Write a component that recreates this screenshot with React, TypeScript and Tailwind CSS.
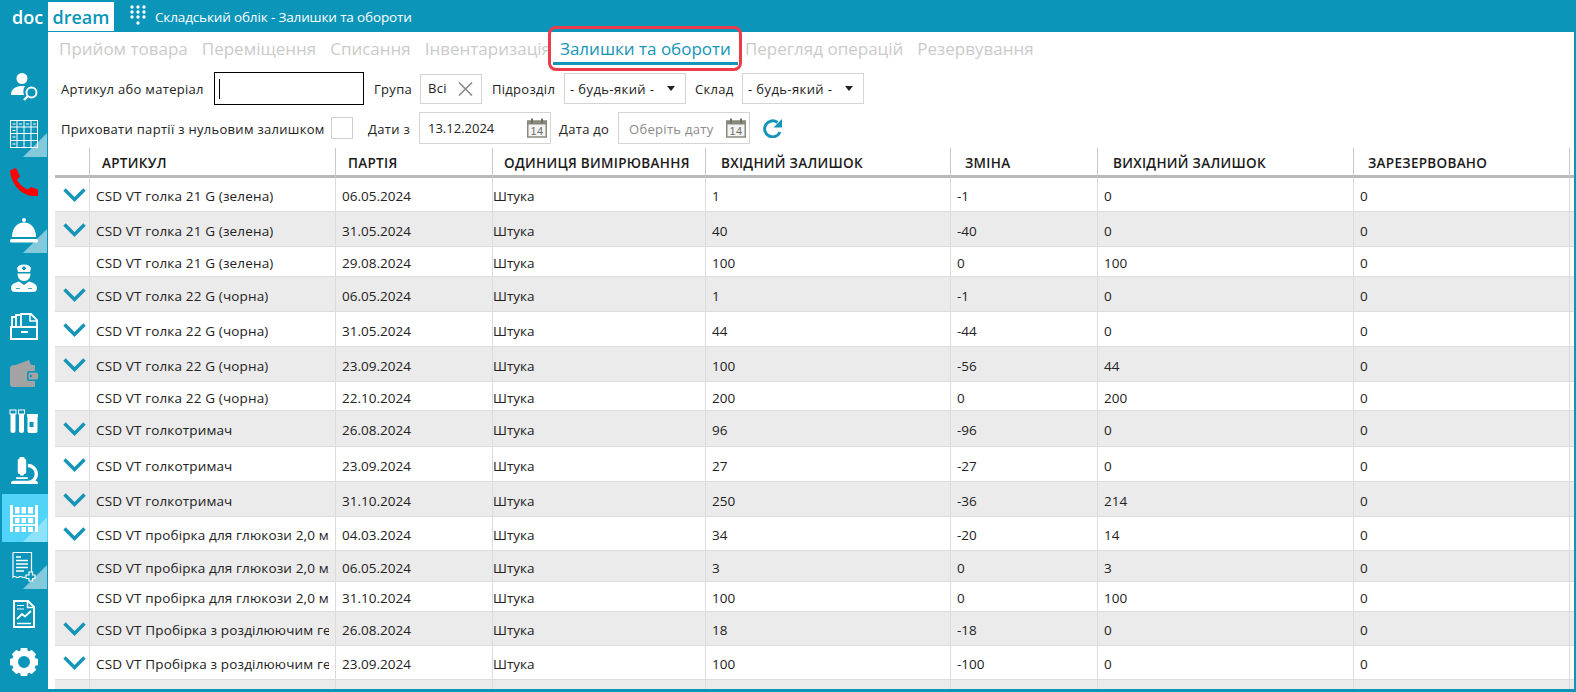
import { FaMicroscope } from "react-icons/fa"
import type { ReactNode } from "react"

const grid = "grid grid-cols-[34px_246px_157px_213px_245px_147px_256px_217px]"
const cell = "border-l border-[#dcdcdc] pl-[6px] pt-[4px] flex items-center"

const rows = [
  { h: "h-[34px]", chev: true, a: "CSD VT голка 21 G (зелена)", d: "06.05.2024", i: "1", c: "-1", o: "0" },
  { h: "h-[35px]", chev: true, a: "CSD VT голка 21 G (зелена)", d: "31.05.2024", i: "40", c: "-40", o: "0" },
  { h: "h-[30px]", chev: false, a: "CSD VT голка 21 G (зелена)", d: "29.08.2024", i: "100", c: "0", o: "100" },
  { h: "h-[35px]", chev: true, a: "CSD VT голка 22 G (чорна)", d: "06.05.2024", i: "1", c: "-1", o: "0" },
  { h: "h-[35px]", chev: true, a: "CSD VT голка 22 G (чорна)", d: "31.05.2024", i: "44", c: "-44", o: "0" },
  { h: "h-[35px]", chev: true, a: "CSD VT голка 22 G (чорна)", d: "23.09.2024", i: "100", c: "-56", o: "44" },
  { h: "h-[29px]", chev: false, a: "CSD VT голка 22 G (чорна)", d: "22.10.2024", i: "200", c: "0", o: "200" },
  { h: "h-[36px]", chev: true, a: "CSD VT голкотримач", d: "26.08.2024", i: "96", c: "-96", o: "0" },
  { h: "h-[35px]", chev: true, a: "CSD VT голкотримач", d: "23.09.2024", i: "27", c: "-27", o: "0" },
  { h: "h-[35px]", chev: true, a: "CSD VT голкотримач", d: "31.10.2024", i: "250", c: "-36", o: "214" },
  { h: "h-[34px]", chev: true, a: "CSD VT пробірка для глюкози 2,0 мл", d: "04.03.2024", i: "34", c: "-20", o: "14" },
  { h: "h-[31px]", chev: false, a: "CSD VT пробірка для глюкози 2,0 мл", d: "06.05.2024", i: "3", c: "0", o: "3" },
  { h: "h-[30px]", chev: false, a: "CSD VT пробірка для глюкози 2,0 мл", d: "31.10.2024", i: "100", c: "0", o: "100" },
  { h: "h-[34px]", chev: true, a: "CSD VT Пробірка з розділюючим гелем", d: "26.08.2024", i: "18", c: "-18", o: "0" },
  { h: "h-[34px]", chev: true, a: "CSD VT Пробірка з розділюючим гелем", d: "23.09.2024", i: "100", c: "-100", o: "0" },
  { h: "h-[34px]", chev: false, a: "", d: "", i: "", c: "", o: "" },
]

const heads = [
  { t: "АРТИКУЛ", cls: "border-l border-[#c8c8c8] pl-[12px]" },
  { t: "ПАРТІЯ", cls: "border-l border-[#c8c8c8] pl-[12px]" },
  { t: "ОДИНИЦЯ ВИМІРЮВАННЯ", cls: "border-l border-[#c8c8c8] pl-[11px]" },
  { t: "ВХІДНИЙ ЗАЛИШОК", cls: "border-l border-[#c8c8c8] pl-[15px]" },
  { t: "ЗМІНА", cls: "border-l border-[#c8c8c8] pl-[14px]" },
  { t: "ВИХІДНИЙ ЗАЛИШОК", cls: "border-l border-[#c8c8c8] pl-[15px]" },
  { t: "ЗАРЕЗЕРВОВАНО", cls: "border-l border-r border-[#c8c8c8] pl-[14px]" },
]

const teeth = [0, 45, 90, 135, 180, 225, 270, 315]

function Corner() {
  return <polygon points="23,47 47,47 47,23" fill="#fff" opacity="0.5" />
}

function Item({ children, active }: { children: ReactNode; active?: boolean }) {
  return (
    <div className={active ? "h-[48px] w-[46px] ml-[2px] bg-[#52d3f8] flex items-center justify-center" : "h-[48px] w-[48px] flex items-center justify-center"}>
      {children}
    </div>
  )
}

function Icon({ children, shift }: { children: ReactNode; shift?: boolean }) {
  return (
    <svg width="48" height="48" viewBox="0 0 48 48" className={shift ? "shrink-0 -ml-[2px]" : "shrink-0"}>
      {children}
    </svg>
  )
}

function Calendar() {
  return (
    <svg width="20" height="20" viewBox="0 0 20 20" className="shrink-0">
      <rect x="0.75" y="3" width="18.5" height="16" fill="#f4f4f4" stroke="#8a8a7c" strokeWidth="1.5" />
      <rect x="0.75" y="3" width="18.5" height="3.5" fill="#8a8a7c" />
      <rect x="4" y="0.5" width="2" height="5" fill="#6f6f63" />
      <rect x="14" y="0.5" width="2" height="5" fill="#6f6f63" />
      <text x="10" y="17" textAnchor="middle" fontSize="11" fontFamily="Liberation Sans, sans-serif" fill="#6f6f63">14</text>
    </svg>
  )
}

function Select() {
  return (
    <div className="w-[122px] h-[31px] border border-[#d4d4d4] flex items-center justify-between pl-[5px] pr-[10px] text-[13px] tracking-[0.4px] text-[#222]">
      <span className="pt-[2px]">- будь-який -</span>
      <span className="w-0 h-0 border-l-[4.5px] border-r-[4.5px] border-t-[5px] border-l-transparent border-r-transparent border-t-[#222]" />
    </div>
  )
}

function Sidebar() {
  return (
    <aside className="w-[48px] shrink-0 pt-[30px]">
      <Item>
        <Icon>
          <circle cx="22" cy="16.5" r="5.5" fill="#fff" />
          <path d="M11 33 C11 27 15 25 20 24 L25 24 C23 27 23 30 24 33 Z" fill="#fff" />
          <circle cx="31.5" cy="30.5" r="5" fill="none" stroke="#fff" strokeWidth="2" />
          <path d="M27.5 34.5 L24 38" stroke="#fff" strokeWidth="2.4" />
        </Icon>
      </Item>
      <Item>
        <Icon>
          <rect x="10.5" y="10.5" width="27" height="27" fill="none" stroke="#fff" />
          <path d="M17 11V37 M24 11V37 M31 11V37 M11 17H37 M11 23.5H37 M11 30.5H37" stroke="#fff" strokeWidth="1" />
          <path d="M12.5 14H15.5 M19 14H22 M26 14H29 M33 14H36 M12.5 20.5H15.5 M12.5 27H15.5 M12.5 34H15.5" stroke="#fff" strokeWidth="1" />
          <Corner />
        </Icon>
      </Item>
      <Item>
        <Icon>
          <path d="M10 12.5 L16 10 L20 18.5 L17 21.5 C19 26 23.5 30 28 31.5 L31 29 L38 31.5 L38 38 L33 38 C20 37 11 25 10 12.5 Z" fill="#f00" />
        </Icon>
      </Item>
      <Item>
        <Icon>
          <circle cx="24" cy="14" r="2" fill="#fff" />
          <path d="M12 31 C12 22 17 16.5 24 16.5 C31 16.5 36 22 36 31 Z" fill="#fff" />
          <rect x="10" y="33" width="28" height="3.5" rx="1.5" fill="#fff" />
          <Corner />
        </Icon>
      </Item>
      <Item>
        <Icon>
          <path d="M17 14 C18 11.5 21 10.5 24 10.5 C27 10.5 30 11.5 31 14 L30 18 H18 Z" fill="#fff" />
          <path d="M17.5 19.5 H30.5 C30.5 24 28 27 24 27 C20 27 17.5 24 17.5 19.5 Z" fill="#fff" />
          <path d="M11 34 C11 30 15 28.5 19 27.5 L24 31 L29 27.5 C33 28.5 37 30 37 34 C37 37 35 38 33 38 H15 C13 38 11 37 11 34 Z" fill="#fff" />
          <path d="M23 12.5 H25 V13.5 H26 V15 H25 V16 H23 V15 H22 V13.5 H23 Z" fill="#0a95b9" />
          <path d="M16 34.5 H20 M28 34.5 H32" stroke="#0a95b9" strokeWidth="0.8" />
        </Icon>
      </Item>
      <Item>
        <Icon>
          <path d="M12 25 V15 H15 M16 25 V13 H20 M21 25 V12 H31 L37 18 V25" fill="none" stroke="#fff" strokeWidth="1.8" />
          <path d="M30 12.5 V19 H37" fill="none" stroke="#fff" strokeWidth="1.5" />
          <rect x="11" y="25" width="26" height="12" fill="none" stroke="#fff" strokeWidth="2" />
          <rect x="21" y="29" width="7" height="2" fill="#fff" />
        </Icon>
      </Item>
      <Item>
        <Icon>
          <path d="M13 16 L29 10 L31 15 Z" fill="#a3a3a3" />
          <path d="M10 19 C10 16.5 11.5 15 14 15 H35 V37 H13 C11 37 10 36 10 34 Z" fill="#a3a3a3" />
          <rect x="27" y="21" width="11" height="10" rx="2" fill="#0a95b9" />
          <rect x="28.5" y="22.5" width="9.5" height="7" rx="1.5" fill="#a3a3a3" />
          <circle cx="31" cy="26" r="1.2" fill="#0a95b9" />
        </Icon>
      </Item>
      <Item>
        <Icon>
          <path d="M10.5 13 H15.5 V32.5 A2.5 2.5 0 0 1 10.5 32.5 Z M19 13 H24 V32.5 A2.5 2.5 0 0 1 19 32.5 Z" fill="#fff" />
          <rect x="10" y="12" width="6" height="4" fill="#0a95b9" stroke="#fff" />
          <rect x="18.5" y="12" width="6" height="4" fill="#0a95b9" stroke="#fff" />
          <rect x="27" y="16" width="11" height="3" fill="#fff" />
          <path d="M27.5 19 H37.5 V33 C37.5 34.5 36.5 35 35.5 35 H29.5 C28.5 35 27.5 34.5 27.5 33 Z" fill="#fff" />
          <rect x="29.5" y="24" width="4" height="5" fill="#0a95b9" />
        </Icon>
      </Item>
      <Item>
        <FaMicroscope color="#fff" size={27} />
      </Item>
      <Item active>
        <Icon shift>
          <polygon points="23,48 47,48 47,23" fill="#fff" opacity="0.35" />
          <rect x="10" y="11" width="3" height="27" fill="#fff" />
          <rect x="35" y="11" width="3" height="27" fill="#fff" />
          <rect x="10" y="21" width="28" height="2" fill="#fff" />
          <rect x="10" y="30" width="28" height="2" fill="#fff" />
          <path d="M15 13 H19.5 V19.5 H15 Z M21.5 13 H26 V19.5 H21.5 Z M28 13 H33 V19.5 H28 Z M15 24 H19.5 V29 H15 Z M21.5 24 H26 V29 H21.5 Z M28 24 H33 V29 H28 Z M15 33 H19.5 V38 H15 Z M21.5 33 H26 V38 H21.5 Z M28 33 H33 V38 H28 Z" fill="#fff" />
        </Icon>
      </Item>
      <Item>
        <Icon>
          <path d="M13 10.5 H31.5 V30 M13 10.5 V35 C15 33 17 37 19 35 C21 33 23 37 25 35" fill="none" stroke="#fff" strokeWidth="1.2" />
          <path d="M16 15 H21 M16 18.5 H28 M16 22 H28 M16 25.5 H28 M16 29 H24" stroke="#fff" strokeWidth="1.5" />
          <path d="M29 30 V33 H26 V36.5 H29 V39 H32.5 V36.5 H35 V33 H32.5 V30 Z" fill="#0a95b9" stroke="#fff" strokeWidth="1.2" />
          <Corner />
        </Icon>
      </Item>
      <Item>
        <Icon>
          <path d="M14 11 H28 L34 17 V37 H14 Z" fill="none" stroke="#fff" strokeWidth="2" />
          <path d="M27.5 11 V17.5 H34" fill="none" stroke="#fff" strokeWidth="1.5" />
          <path d="M17 15.5 H24 M17 19 H24" stroke="#fff" strokeWidth="1.2" />
          <path d="M17 29 L22 24 L25 26.5 L31 21" fill="none" stroke="#fff" strokeWidth="1.8" />
          <path d="M17 33.5 H31" stroke="#fff" strokeWidth="1.5" />
        </Icon>
      </Item>
      <Item>
        <Icon>
          <circle cx="24" cy="24" r="9" fill="none" stroke="#fff" strokeWidth="6" />
          {teeth.map(a => (
            <rect key={a} x="20.5" y="10" width="7" height="6" rx="1" fill="#fff" transform={`rotate(${a} 24 24)`} />
          ))}
        </Icon>
      </Item>
    </aside>
  )
}

export default function App() {
  return (
    <div className="w-[1576px] h-[692px] overflow-hidden bg-[#0a95b9] flex flex-col font-['Open_Sans','Noto_Sans',sans-serif] text-[#222]">
      <header className="h-[32px] shrink-0 flex items-start">
        <span className="w-[48px] h-[31px] pl-[12px] text-white font-semibold text-[18px] leading-[34px]">doc</span>
        <span className="w-[66px] h-[29px] mt-[2px] bg-white text-[#0a95b9] font-semibold text-[18px] leading-[31px] text-center">dream</span>
        <svg width="16" height="22" viewBox="0 0 16 22" className="ml-[16px] mt-[5px] fill-white">
          <circle cx="2" cy="2" r="1.7" /><circle cx="8" cy="2" r="1.7" /><circle cx="14" cy="2" r="1.7" />
          <circle cx="2" cy="7" r="1.7" /><circle cx="8" cy="7" r="1.7" /><circle cx="14" cy="7" r="1.7" />
          <circle cx="2" cy="12" r="1.7" /><circle cx="8" cy="12" r="1.7" /><circle cx="14" cy="12" r="1.7" />
          <circle cx="8" cy="18" r="1.7" />
        </svg>
        <span className="ml-[9px] text-white text-[13.5px] tracking-[-0.14px] leading-[34px]">Складський облік - Залишки та обороти</span>
      </header>

      <div className="flex flex-1 min-h-0">
        <Sidebar />
        <main className="flex-1 min-w-0 bg-white mr-[2px] mb-[3px] flex flex-col">
          <nav className="relative h-[40px] shrink-0 flex items-start pl-[11px] gap-[14px] text-[17px] leading-[34px] text-[#cbcbcb]">
            <span>Прийом товара</span>
            <span>Переміщення</span>
            <span>Списання</span>
            <span>Інвентаризація</span>
            <span className="h-[33px] -ml-[12px] -mr-[7px] px-[7px] border-b-[3px] border-[#1495b8] text-[#1495b8]">Залишки та обороти</span>
            <span>Перегляд операцій</span>
            <span>Резервування</span>
            <div className="absolute left-[500px] -top-[6px] w-[194px] h-[45px] border-[3px] border-[#ee3b4b] rounded-[8px]" />
          </nav>

          <div className="h-[33px] shrink-0 flex items-center pl-[13px] text-[13px] tracking-[0.3px]">
            <span className="w-[153px] pt-[2px]">Артикул або матеріал</span>
            <div className="w-[150px] h-[33px] border border-black flex items-center pl-[4px]">
              <div className="w-px h-[20px] bg-black" />
            </div>
            <span className="ml-[10px] w-[46px] pt-[2px]">Група</span>
            <div className="w-[62px] h-[30px] border border-[#d4d4d4] flex items-center justify-between pl-[7px] pr-[8px]">
              <span>Всі</span>
              <svg width="15" height="14" viewBox="0 0 15 14" stroke="#8c8c8c" strokeWidth="1.6"><path d="M1 0.5 L14 13.5 M14 0.5 L1 13.5" /></svg>
            </div>
            <span className="ml-[10px] w-[72px] pt-[2px]">Підрозділ</span>
            <Select />
            <span className="ml-[9px] w-[47px] pt-[2px]">Склад</span>
            <Select />
          </div>

          <div className="h-[32px] mt-[7px] shrink-0 flex items-center pl-[13px] text-[13px] tracking-[0.3px]">
            <span className="w-[270px] whitespace-nowrap pt-[4px]">Приховати партії з нульовим залишком</span>
            <div className="w-[22px] h-[22px] border border-[#cfcfcf]" />
            <span className="ml-[15px] w-[51px] pt-[3px]">Дати з</span>
            <div className="w-[132px] h-[32px] border border-[#d4d4d4] flex items-center justify-between pl-[8px] pr-[3px]">
              <span className="pt-[2px] tracking-normal">13.12.2024</span>
              <Calendar />
            </div>
            <span className="ml-[8px] w-[59px] pt-[3px]">Дата до</span>
            <div className="w-[132px] h-[32px] border border-[#d4d4d4] flex items-center justify-between pl-[10px] pr-[3px] text-[#8a8a8a]">
              <span className="pt-[3px]">Оберіть дату</span>
              <Calendar />
            </div>
            <svg width="22" height="20" viewBox="0 0 22 20" className="ml-[12px]" fill="none">
              <path d="M18 14 A8 8 0 1 1 15.5 4.5" stroke="#1495b8" strokeWidth="3" />
              <polygon points="20,1 20,9.5 11.5,9.5" fill="#1495b8" />
            </svg>
          </div>

          <div className="mt-[4px] ml-[7px] flex-1 min-h-0 overflow-hidden text-[13.5px]">
            <div className={grid + " h-[30px] border-b-[3px] border-[#b9b9b9] font-semibold text-[13.5px] tracking-[0.3px] text-[#1a1a1a]"}>
              <div />
              {heads.map(h => (
                <div key={h.t} className={h.cls + " leading-[30px] whitespace-nowrap"}>{h.t}</div>
              ))}
            </div>
            {rows.map((r, n) => (
              <div key={n} className={grid + " " + r.h + " border-b border-[#dcdcdc] " + (n % 2 === 1 ? "bg-[#ebebeb]" : "bg-white")}>
                <div className="flex items-center justify-center pl-[5px] pt-[1px]">
                  {r.chev && (
                    <svg width="23" height="14" viewBox="0 0 23 14" fill="none" stroke="#1495b8" strokeWidth="3.4"><path d="M1.5 1.5 L11.5 11.5 L21.5 1.5" /></svg>
                  )}
                </div>
                <div className={cell + " pr-[6px]"}>
                  <span className="overflow-hidden whitespace-nowrap tracking-[0.15px]">{r.a}</span>
                </div>
                <div className={cell}>{r.d}</div>
                <div className="border-l border-[#dcdcdc] pt-[4px] flex items-center">{r.d ? "Штука" : ""}</div>
                <div className={cell}>{r.i}</div>
                <div className={cell}>{r.c}</div>
                <div className={cell}>{r.o}</div>
                <div className={cell + " border-r"}>{r.d ? "0" : ""}</div>
              </div>
            ))}
          </div>
        </main>
      </div>
    </div>
  )
}
